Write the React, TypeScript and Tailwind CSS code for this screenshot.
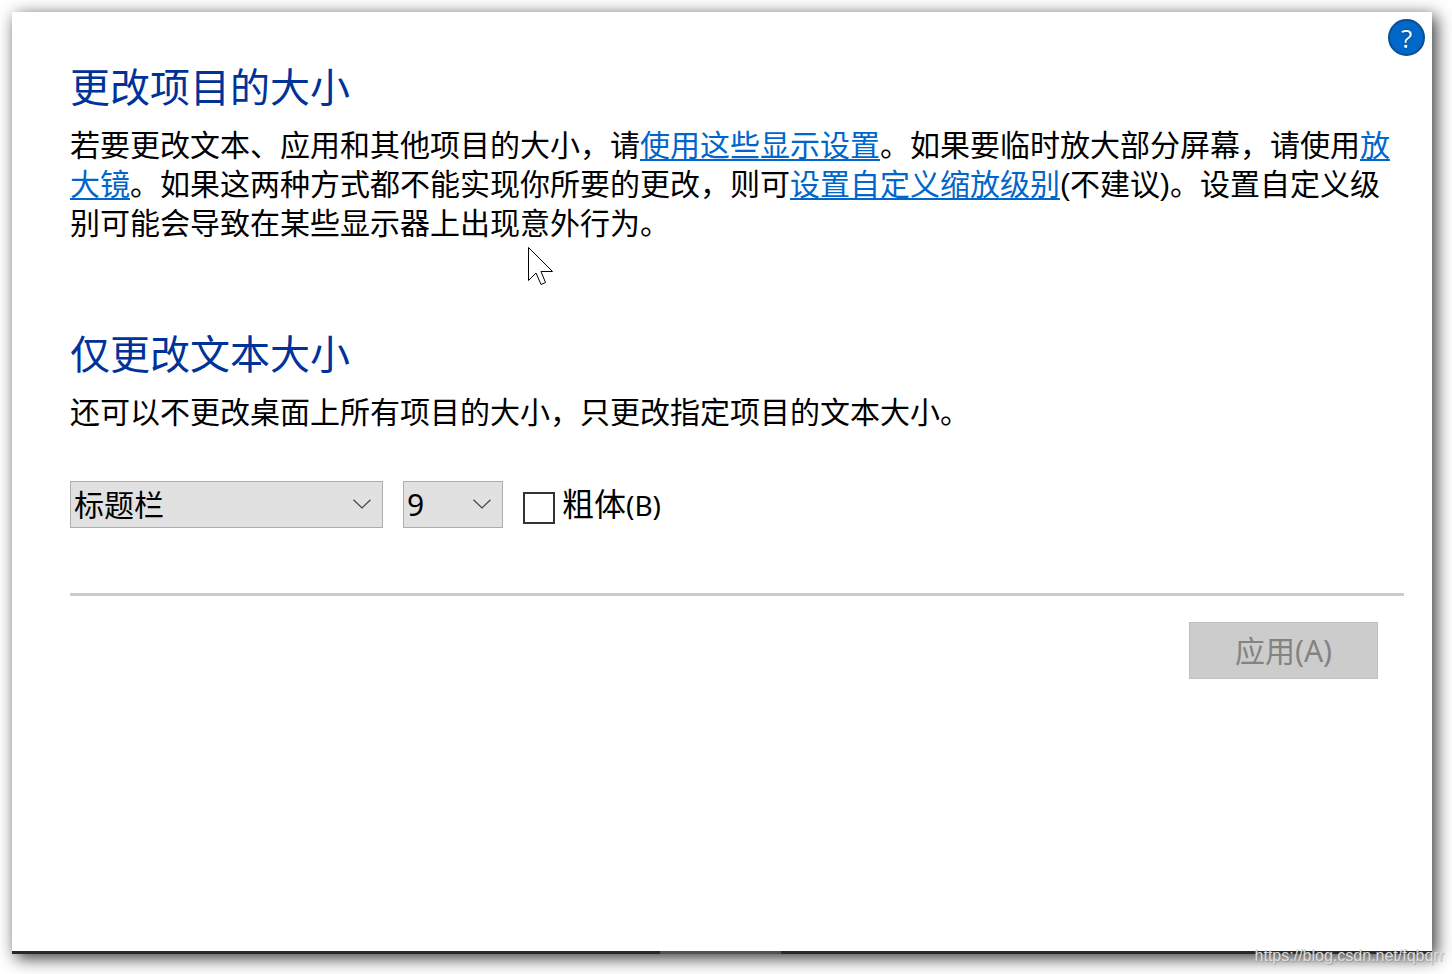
import React, { useState } from "react"

const textTargets = ["标题栏", "菜单", "消息框", "调色板标题", "图标", "工具提示"]
const fontSizes = ["6", "7", "8", "9", "10", "11", "12"]

type DropdownProps = {
  label: string
  options: string[]
  value: string
  onChange: (value: string) => void
  className: string
}

function Dropdown({ label, options, value, onChange, className }: DropdownProps) {
  return (
    <div className={["relative h-[47px]", className].join(" ")}>
      <select
        aria-label={label}
        value={value}
        onChange={(e) => onChange(e.target.value)}
        className="w-full h-full appearance-none rounded-none border border-[#adadad] bg-[#e1e1e1] pl-[3px] pr-10 text-black">
        {options.map((option) => (
          <option key={option}>{option}</option>
        ))}
      </select>
      <svg
        viewBox="0 0 18 10"
        className="absolute right-3 top-[18px] w-[18px] h-[10px] pointer-events-none"
        fill="none"
        stroke="#444444"
        strokeWidth="1.2">
        <path d="M0.5 0.8L9 9L17.5 0.8" />
      </svg>
    </div>
  )
}

function Link({ children }: { children: React.ReactNode }) {
  return (
    <a
      href="#"
      className="text-[#0066cc] underline decoration-2 underline-offset-[3px]">
      {children}
    </a>
  )
}

function Pointer() {
  return (
    <svg
      viewBox="0 0 26 40"
      className="absolute left-[515px] top-[234px] w-[26px] h-10 pointer-events-none"
      fill="white"
      stroke="black"
      strokeWidth="1">
      <path d="M1.5 1.5V34.5L9 27L14 38.5L18.5 36.5L14 25.5H25.5Z" />
    </svg>
  )
}

export default function App() {
  const [target, setTarget] = useState("标题栏")
  const [size, setSize] = useState("9")
  const [bold, setBold] = useState(false)

  return (
    <div
      lang="zh-CN"
      className="relative flex min-h-screen overflow-hidden bg-white pt-3 pl-3 pr-5 pb-5 font-['Noto_Sans','Noto_Sans_CJK_SC',sans-serif] text-[30px] leading-[39px] text-black">
      <div className="relative flex flex-1 flex-col bg-white shadow-[4px_4px_16px_rgba(0,0,0,0.8)]">
        <header className="flex justify-end p-[7px]">
          <button
            aria-label="帮助"
            className="w-[37px] h-[37px] rounded-full border-2 border-[#0a4f8f] bg-[#0068c8] font-['Open_Sans',sans-serif] text-[26px] leading-8 text-white [text-shadow:0_0_2px_#003366]">
            ?
          </button>
        </header>

        <main className="flex-1 pl-[58px] pr-7">
          <section>
            <h1 className="text-[40px] leading-12 text-[#003399]">
              更改项目的大小
            </h1>
            <p className="mt-[15px] font-['Liberation_Sans','Noto_Sans_CJK_SC',sans-serif]">
              若要更改文本、应用和其他项目的大小，请<Link>使用这些显示设置</Link>
              。如果要临时放大部分屏幕，请使用<Link>放大镜</Link>
              。如果这两种方式都不能实现你所要的更改，则可
              <Link>设置自定义缩放级别</Link>
              (不建议)。设置自定义级别可能会导致在某些显示器上出现意外行为。
            </p>
          </section>

          <section className="mt-[87px]">
            <h2 className="text-[40px] leading-12 text-[#003399]">
              仅更改文本大小
            </h2>
            <p className="mt-[15px] font-['Liberation_Sans','Noto_Sans_CJK_SC',sans-serif]">
              还可以不更改桌面上所有项目的大小，只更改指定项目的文本大小。
            </p>
            <div className="mt-[49px] flex items-center gap-5">
              <Dropdown
                label="项目"
                options={textTargets}
                value={target}
                onChange={setTarget}
                className="w-[313px]"
              />
              <Dropdown
                label="字号"
                options={fontSizes}
                value={size}
                onChange={setSize}
                className="w-[100px]"
              />
              <label className="flex items-center gap-[7px]">
                <input
                  type="checkbox"
                  checked={bold}
                  onChange={() => setBold(!bold)}
                  className="mt-1.5 w-8 h-8 appearance-none border-2 border-[#333333] bg-white checked:bg-[#333333]"
                />
                <span className="text-[32px]">
                  粗体<span className="text-[28px]">(B)</span>
                </span>
              </label>
            </div>
          </section>

          <hr className="mt-[65px] border-0 h-[3px] bg-[#cccccc]" />
          <div className="mt-[26px] mr-[26px] flex justify-end">
            <button
              disabled
              className="w-[189px] h-[57px] border border-[#bfbfbf] bg-[#cccccc] text-[#838383]">
              应用(A)
            </button>
          </div>
        </main>

        <div className="flex h-[3px] bg-[#282828]">
          <div className="ml-[648px] w-[121px] bg-[#505050]" />
        </div>
        <Pointer />
      </div>
      <span className="absolute right-2 bottom-2 font-['Liberation_Sans',sans-serif] text-base leading-5 text-[#dcdcdc] [text-shadow:1px_1px_1px_rgba(130,130,130,0.5)]">
        https://blog.csdn.net/fqbqrr
      </span>
    </div>
  )
}
